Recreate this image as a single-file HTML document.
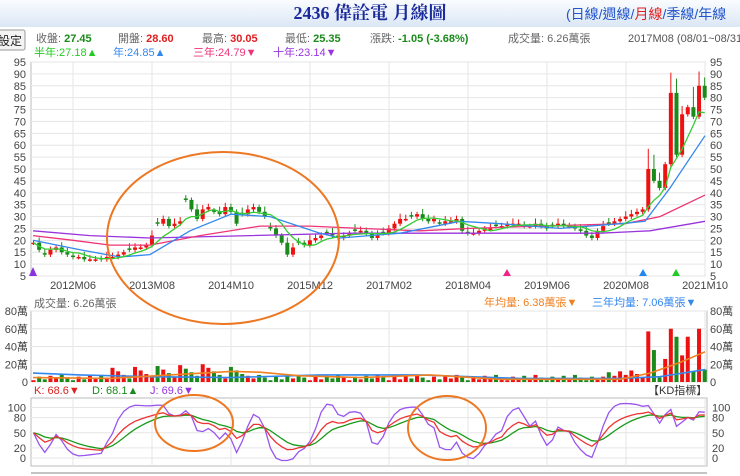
<!DOCTYPE html>
<html><head><meta charset="utf-8">
<style>
body{margin:0;width:740px;height:476px;overflow:hidden;background:#fff;font-family:"Liberation Sans","Noto Sans CJK TC",sans-serif;}
#hdr{position:absolute;left:0;top:0;width:740px;height:27px;background:linear-gradient(#fafcff,#dbe7f5);}
svg{position:absolute;left:0;top:0}
</style></head><body>
<div id="hdr"></div>
<svg id="s" width="740" height="476" xmlns="http://www.w3.org/2000/svg" font-family="Liberation Sans, Noto Sans CJK TC, sans-serif">
<text x="370" y="19" text-anchor="middle" font-family="Liberation Serif, Noto Serif CJK SC, serif" font-weight="bold" font-size="18" fill="#1a2a9a">2436 偉詮電 月線圖</text>
<text x="566" y="19" font-size="14" fill="#2255cc">(日線/週線/<tspan fill="#e02020">月線</tspan>/季線/年線</text>
<rect x="-6" y="30" width="31" height="20" rx="2" fill="#f4f4f4" stroke="#999"/>
<text x="-2" y="45" font-size="12" fill="#222">設定</text>
<g font-size="11">
<text x="36" y="42" fill="#666">收盤: <tspan fill="#1a8a1a" font-weight="bold">27.45</tspan></text>
<text x="118" y="42" fill="#666">開盤: <tspan fill="#e02020" font-weight="bold">28.60</tspan></text>
<text x="202" y="42" fill="#666">最高: <tspan fill="#e02020" font-weight="bold">30.05</tspan></text>
<text x="285" y="42" fill="#666">最低: <tspan fill="#1a8a1a" font-weight="bold">25.35</tspan></text>
<text x="370" y="42" fill="#666">漲跌: <tspan fill="#1a8a1a" font-weight="bold">-1.05  (-3.68%)</tspan></text>
<text x="508" y="42" fill="#666">成交量: 6.26萬張</text>
<text x="628" y="42" fill="#555">2017M08 (08/01~08/31)</text>
<text x="34" y="56" fill="#22cc22">半年:27.18▲</text>
<text x="113" y="56" fill="#3388ee">年:24.85▲</text>
<text x="193" y="56" fill="#ee3377">三年:24.79▼</text>
<text x="273" y="56" fill="#9933dd">十年:23.14▼</text>
<text x="34" y="307" fill="#666">成交量: 6.26萬張</text>
<text x="484" y="306" fill="#f08020">年均量: 6.38萬張▼</text>
<text x="592" y="306" fill="#3388ee">三年均量: 7.06萬張▼</text>
<text x="34" y="394" fill="#e02020">K: 68.6▼</text>
<text x="92" y="394" fill="#1a8a1a">D: 68.1▲</text>
<text x="150" y="394" fill="#9933dd">J: 69.6▼</text>
<text x="648" y="394" fill="#333">【KD指標】</text>
</g>
<g id="g"></g>
</svg>
<script>
var G=document.getElementById("g"),h="";
function X(m){return 73+m*5.64}
function PY(v){return 276-(v-5)*2.378}
function VY(v){return 382-v*0.8875}
function KY(v){return 458-v*0.505}
h+='<rect x="31" y="62" width="674" height="214" fill="none" stroke="#bbb"/>';
h+='<rect x="31" y="311" width="676" height="71" fill="none" stroke="#bbb"/>';
h+='<rect x="31" y="398" width="676" height="68" fill="none" stroke="#bbb"/>';
h+='<line x1="31" y1="473" x2="707" y2="473" stroke="#888"/>';
for(var v=5;v<=95;v+=5){var y=PY(v);h+='<line x1="31" x2="705" y1="'+y+'" y2="'+y+'" stroke="#e6e6e6"/>';
h+='<text x="26" y="'+(y+4)+'" font-size="11" fill="#444" text-anchor="end">'+v+'</text><text x="710" y="'+(y+4)+'" font-size="11" fill="#444">'+v+'</text>';}
var labs=["2012M06","2013M08","2014M10","2015M12","2017M02","2018M04","2019M06","2020M08","2021M10"];
for(var i=0;i<9;i++){var x=73+i*79;h+='<line x1="'+x+'" x2="'+x+'" y1="62" y2="276" stroke="#e6e6e6"/><line x1="'+x+'" x2="'+x+'" y1="311" y2="382" stroke="#e6e6e6"/><line x1="'+x+'" x2="'+x+'" y1="398" y2="466" stroke="#e6e6e6"/>';
h+='<text x="'+x+'" y="289" font-size="11" fill="#444" text-anchor="middle">'+labs[i]+'</text>';}
[0,20,40,60,80].forEach(function(v){var y=VY(v);h+='<line x1="31" x2="707" y1="'+y+'" y2="'+y+'" stroke="#e6e6e6"/>';var t=v?v+'萬':'0';
h+='<text x="28" y="'+(y+4)+'" font-size="11" fill="#444" text-anchor="end">'+t+'</text><text x="710" y="'+(y+4)+'" font-size="11" fill="#444">'+t+'</text>';});
[0,20,50,80,100].forEach(function(v){var y=KY(v);h+='<line x1="31" x2="707" y1="'+y+'" y2="'+y+'" stroke="#e6e6e6"/>';
h+='<text x="26" y="'+(y+4)+'" font-size="11" fill="#444" text-anchor="end">'+v+'</text><text x="712" y="'+(y+4)+'" font-size="11" fill="#444">'+v+'</text>';});
var C=[19,16,14,16,17,15,14,13,13,12,12,12,12,13,13,14,15,16,17,17,18,22,27,29,26,27,28,37,33,29,33,34,32,31,34,32,27,31,33,34,32,30,25,22,19,14,17,19,18,20,21,22,23,22,21,22,23,24,24,23,21,22,23,25,27,29,29,30,31,29,28,29,27,28,28,29,24,23,23,24,25,25,26,26,27,
27,27,26,26,27,26,25,26,27,26,26,25,24,22,
21,24,26,27,28,29,30,31,32,33,
50,45,42,52,82,56,73,76,72,85,80];
var N=C.length,st=-7;
var vol=[];
for(var i=0;i<N;i++){var m=st+i,x=X(m),o=i?C[i-1]:C[0],c=C[i];if(i%5==2&&m<100){o=c+0.6;}
var up=c>=o,col=up?"#ee1111":"#1a8a1a",hi=Math.max(o,c)+1+((i*7)%4)*(c>40?2.5:0.4),lo=Math.min(o,c)-1-((i*3)%3)*(c>40?3:0.3);
if(x>706)break;
h+='<line x1="'+x+'" x2="'+x+'" y1="'+PY(hi)+'" y2="'+PY(lo)+'" stroke="'+col+'"/>';
var y1=PY(Math.max(o,c)),y2=PY(Math.min(o,c));h+='<rect x="'+(x-2)+'" y="'+y1+'" width="4" height="'+Math.max(1.5,y2-y1)+'" fill="'+col+'"/>';
var vv=m>=102?[57,36,5,26,60,51,30,51,12,60,14][m-102]:(m>=7&&m<=30?4+((i*13)%17):2+((i*11)%7));if(m>=94&&m<102)vv=5+((i*5)%9);
vol.push([x,vv,col]);}
vol.forEach(function(a){h+='<rect x="'+(a[0]-2)+'" y="'+VY(a[1])+'" width="4" height="'+(a[1]*0.8875)+'" fill="'+a[2]+'"/>';});
function poly(pts,col,w){return '<polyline fill="none" stroke="'+col+'" stroke-width="'+(w||1.3)+'" points="'+pts.map(function(p){return p[0].toFixed(1)+','+p[1].toFixed(1)}).join(' ')+'"/>';}
function ma(n){var r=[];for(var i=0;i<N;i++){var s=0,k=0;for(var j=Math.max(0,i-n+1);j<=i;j++){s+=C[j];k++;}var x=X(st+i);if(x<=706)r.push([x,PY(s/k)]);}return r;}
var pink=[[33,22],[73,20],[110,18],[150,18],[200,22],[260,26],[310,26],[360,25],[420,24],[470,25],[540,26],[625,27],[660,30],[705,39]].map(function(p){return[p[0],PY(p[1])]});
var purp=[[33,24],[90,22],[150,21],[250,22],[350,23],[450,23],[600,23],[650,24],[705,28]].map(function(p){return[p[0],PY(p[1])]});
var blue=[[33,20],[80,16],[120,13],[150,14],[190,24],[231,31],[270,30],[320,23],[340,21],[400,23],[460,28],[500,27],[560,25],[620,27],[645,28],[670,42],[705,64]].map(function(p){return[p[0],PY(p[1])]});
h+=poly(purp,"#9933dd")+poly(pink,"#ee3377")+poly(blue,"#3388ee")+poly(ma(6),"#33cc33");
h+=poly([[33,10],[80,8],[150,6],[230,5],[320,8],[420,8],[520,4],[620,4],[660,6],[705,14]].map(function(p){return[p[0],VY(p[1])]}),"#3388ee",1.6);
h+=poly([[33,5],[110,4],[170,8],[231,12],[260,11],[300,7],[360,5],[430,8],[500,3],[620,3],[650,10],[680,22],[705,34]].map(function(p){return[p[0],VY(p[1])]}),"#f08020",1.6);
var K=50,D=50,kp=[],dp=[],jp=[];
for(var i=0;i<N;i++){var a=Math.max(0,i-8),hh=-1,ll=999;for(var j=a;j<=i;j++){hh=Math.max(hh,C[j]+1);ll=Math.min(ll,C[j]-1);}
var rsv=(C[i]-ll)/(hh-ll)*100;K=K*2/3+rsv/3;D=D*2/3+K/3;var J=Math.max(-5,Math.min(108,3*K-2*D));var x=X(st+i);if(x>706)break;
kp.push([x,KY(K)]);dp.push([x,KY(D)]);jp.push([x,KY(J)]);}
h+=poly(jp,"#9955ee")+poly(dp,"#1a9a1a")+poly(kp,"#ee3333");
h+='<polygon points="29,276 37,276 33,267" fill="#8833dd"/><polygon points="503,276 511,276 507,269" fill="#ee2288"/><polygon points="639,276 647,276 643,269" fill="#2288ee"/><polygon points="672,276 680,276 676,269" fill="#22cc22"/>';
h+='<ellipse cx="223" cy="238" rx="116" ry="86" fill="none" stroke="#ee7722" stroke-width="2"/><ellipse cx="194" cy="423" rx="39" ry="28" fill="none" stroke="#ee7722" stroke-width="2"/><ellipse cx="447" cy="428" rx="39" ry="32" fill="none" stroke="#ee7722" stroke-width="2"/>';
G.innerHTML=h;
</script>
</body></html>
